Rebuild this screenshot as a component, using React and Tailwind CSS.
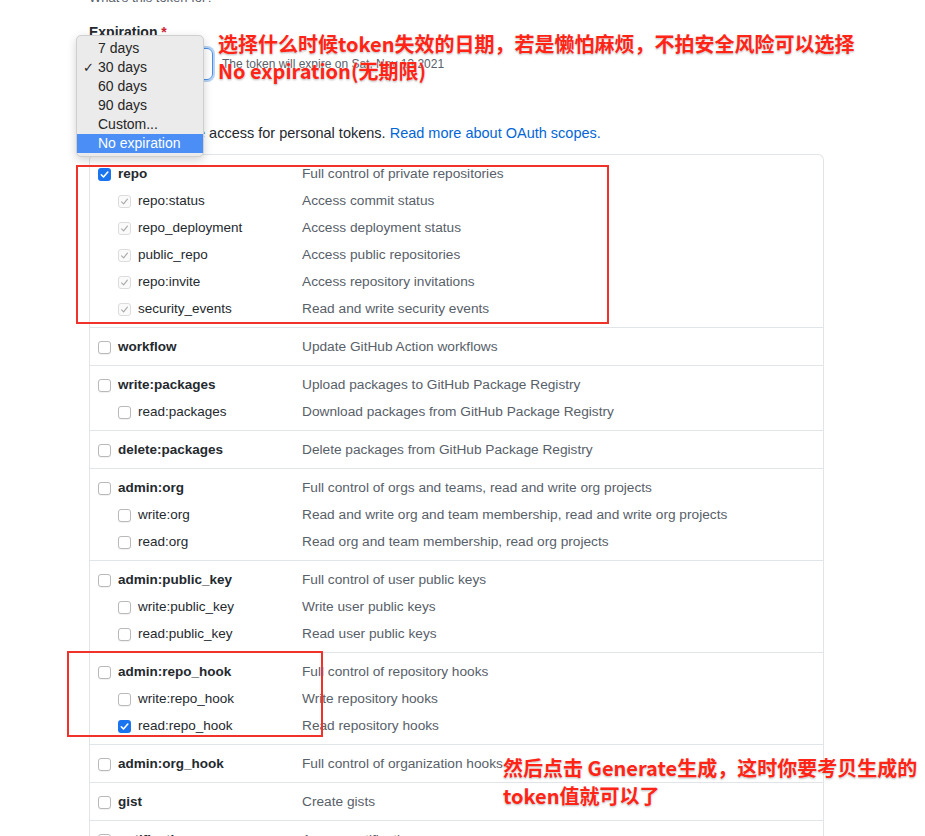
import React from "react";

const groups = [
  [
    { name: "repo", desc: "Full control of private repositories", state: "on" },
    { name: "repo:status", desc: "Access commit status", state: "dim" },
    { name: "repo_deployment", desc: "Access deployment status", state: "dim" },
    { name: "public_repo", desc: "Access public repositories", state: "dim" },
    { name: "repo:invite", desc: "Access repository invitations", state: "dim" },
    { name: "security_events", desc: "Read and write security events", state: "dim" },
  ],
  [{ name: "workflow", desc: "Update GitHub Action workflows" }],
  [
    { name: "write:packages", desc: "Upload packages to GitHub Package Registry" },
    { name: "read:packages", desc: "Download packages from GitHub Package Registry" },
  ],
  [{ name: "delete:packages", desc: "Delete packages from GitHub Package Registry" }],
  [
    { name: "admin:org", desc: "Full control of orgs and teams, read and write org projects" },
    { name: "write:org", desc: "Read and write org and team membership, read and write org projects" },
    { name: "read:org", desc: "Read org and team membership, read org projects" },
  ],
  [
    { name: "admin:public_key", desc: "Full control of user public keys" },
    { name: "write:public_key", desc: "Write user public keys" },
    { name: "read:public_key", desc: "Read user public keys" },
  ],
  [
    { name: "admin:repo_hook", desc: "Full control of repository hooks" },
    { name: "write:repo_hook", desc: "Write repository hooks" },
    { name: "read:repo_hook", desc: "Read repository hooks", state: "on" },
  ],
  [{ name: "admin:org_hook", desc: "Full control of organization hooks" }],
  [{ name: "gist", desc: "Create gists" }],
  [{ name: "notifications", desc: "Access notifications" }],
];

const options = ["7 days", "30 days", "60 days", "90 days", "Custom...", "No expiration"];

function Checkbox({ state }) {
  if (state === "on") {
    return (
      <span className="w-[13px] h-[13px] rounded-[3px] bg-[#1a74f0] flex items-center justify-center shrink-0">
        <svg width="11" height="11" viewBox="0 0 11 11">
          <path d="M2.3 5.8 L4.5 8 L8.8 3" fill="none" stroke="#fff" strokeWidth="1.6" strokeLinecap="round" strokeLinejoin="round" />
        </svg>
      </span>
    );
  }
  if (state === "dim") {
    return (
      <span className="w-[13px] h-[13px] rounded-[3px] border border-[#dcdcdc] bg-[#fafafa] flex items-center justify-center shrink-0">
        <svg width="11" height="11" viewBox="0 0 11 11">
          <path d="M2.6 5.8 L4.6 7.8 L8.4 3.2" fill="none" stroke="#a8a8a8" strokeWidth="1.1" strokeLinecap="round" strokeLinejoin="round" />
        </svg>
      </span>
    );
  }
  return <span className="w-[13px] h-[13px] rounded-[3px] border border-[#b9b9b9] bg-white shadow-[0_1px_1px_rgba(0,0,0,0.06)] shrink-0" />;
}

function ScopeGroup({ rows }) {
  return (
    <div className="border-b border-[#e1e4e8] pt-[6px] pb-[4px]">
      {rows.map((r, i) => (
        <div key={r.name} className="flex items-center h-[27px]">
          <div className={`w-[212px] flex items-center gap-[7px] ${i === 0 ? "pl-[8px]" : "pl-[28px]"}`}>
            <Checkbox state={r.state} />
            <span className={i === 0 ? "font-bold text-[13.5px] text-[#24292e]" : "text-[13.5px] text-[#24292e]"}>{r.name}</span>
          </div>
          <span className="text-[13.7px] text-[#586069] whitespace-nowrap">{r.desc}</span>
        </div>
      ))}
    </div>
  );
}

export default function App() {
  return (
    <div className="relative w-[925px] h-[836px] overflow-hidden bg-white font-['Liberation_Sans',Arial,sans-serif]">
      <div className="pl-[89px]">
        <p className="-mt-[12px] leading-[20px] text-[13px] text-[#586069]">What's this token for?</p>
        <p className="mt-[14px] leading-[20px] text-[14px] font-bold text-[#24292e]">
          Expiration <span className="text-[#cb2431]">*</span>
        </p>
        <div className="mt-[6px] flex items-center">
          <div className="w-[124px] h-[32px] rounded-[6px] border border-[#4a8fe7] ring-2 ring-[#4a8fe7]/40 flex items-center px-3 text-[14px] text-[#24292e]">
            30 days
          </div>
          <span className="ml-[9px] text-[12px] text-[#586069]">The token will expire on Sat, Nov 13 2021</span>
        </div>
        <p className="mt-[43px] leading-[20px] text-[14.5px] text-[#24292e]">
          Scopes define the access for personal tokens. <span className="text-[#0366d6]">Read more about OAuth scopes.</span>
        </p>
        <div className="mt-[11px] w-[735px] border-x border-t border-[#e1e4e8] rounded-t-[6px]">
          {groups.map((g) => (
            <ScopeGroup key={g[0].name} rows={g} />
          ))}
        </div>
      </div>

      {/* expiration dropdown */}
      <div className="absolute left-[76px] top-[35px] w-[128px] py-[3px] rounded-[5px] bg-[#ebebeb] border border-[#cfcfcf] shadow-[0_3px_10px_rgba(0,0,0,0.18)]">
        {options.map((o) => (
          <div
            key={o}
            className={`flex items-center h-[19px] pl-[6px] text-[14px] ${o === "No expiration" ? "bg-[#4a8ef6] text-white" : "text-[#262626]"}`}
          >
            <span className="w-[15px] text-[13px]">{o === "30 days" ? "✓" : ""}</span>
            {o}
          </div>
        ))}
      </div>

      {/* red highlight boxes */}
      <div className="absolute left-[76px] top-[165px] w-[533px] h-[159px] border-2 border-[#f0322a]" />
      <div className="absolute left-[67px] top-[651px] w-[256px] h-[86px] border-2 border-[#f0322a]" />

      {/* annotations */}
      <div className="absolute left-[218px] top-[30px] text-[20px] leading-[27px] font-bold text-[#ff2416] font-['Noto_Sans_CJK_SC',sans-serif] [text-shadow:0_0_2px_#fff,0_1px_2px_rgba(0,0,0,0.35)] whitespace-nowrap">
        <p>选择什么时候token失效的日期，若是懒怕麻烦，不拍安全风险可以选择</p>
        <p>No expiration(无期限)</p>
      </div>
      <div className="absolute left-[503px] top-[754px] text-[20px] leading-[28px] font-bold text-[#ff2416] font-['Noto_Sans_CJK_SC',sans-serif] [text-shadow:0_0_2px_#fff,0_1px_2px_rgba(0,0,0,0.35)] whitespace-nowrap">
        <p>然后点击 Generate生成，这时你要考贝生成的</p>
        <p>token值就可以了</p>
      </div>
    </div>
  );
}
